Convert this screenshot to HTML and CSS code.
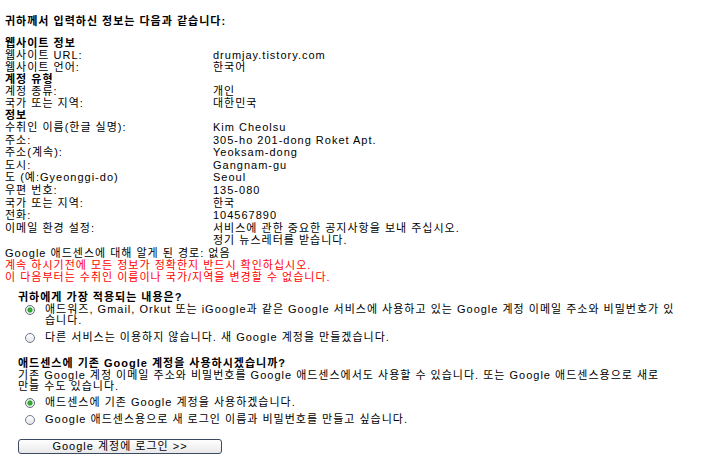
FILE: index.html
```html
<!DOCTYPE html>
<html lang="ko">
<head>
  <meta charset="UTF-8" />
  <title>Google 애드센스 - 정보 확인</title>
  <link rel="stylesheet" href="styles.css">
</head>
<body>
  <div class="page">
    <h1 class="intro">귀하께서 입력하신 정보는 다음과 같습니다:</h1>

    <div class="info">
      <div class="section-title">웹사이트 정보</div>
      <div class="row"><span>웹사이트 URL:</span><span>drumjay.tistory.com</span></div>
      <div class="row"><span>웹사이트 언어:</span><span>한국어</span></div>

      <div class="section-title">계정 유형</div>
      <div class="row"><span>계정 종류:</span><span>개인</span></div>
      <div class="row"><span>국가 또는 지역:</span><span>대한민국</span></div>

      <div class="section-title">정보</div>
      <div class="contact">
        <div class="row"><span>수취인 이름(한글 실명):</span><span>Kim Cheolsu</span></div>
        <div class="row"><span>주소:</span><span>305-ho 201-dong Roket Apt.</span></div>
        <div class="row"><span>주소(계속):</span><span>Yeoksam-dong</span></div>
        <div class="row"><span>도시:</span><span>Gangnam-gu</span></div>
        <div class="row"><span>도 (예:Gyeonggi-do)</span><span>Seoul</span></div>
        <div class="row"><span>우편 번호:</span><span>135-080</span></div>
        <div class="row"><span>국가 또는 지역:</span><span>한국</span></div>
        <div class="row"><span>전화:</span><span>104567890</span></div>
        <div class="row"><span>이메일 환경 설정:</span><span>서비스에 관한 중요한 공지사항을 보내 주십시오.<br>정기 뉴스레터를 받습니다.</span></div>
      </div>
    </div>

    <p class="source">Google 애드센스에 대해 알게 된 경로: 없음</p>
    <p class="warning">계속 하시기전에 모든 정보가 정확한지 반드시 확인하십시오.<br>이 다음부터는 수취인 이름이나 국가/지역을 변경할 수 없습니다.</p>

    <div class="question">
      <div class="q-title">귀하에게 가장 적용되는 내용은?</div>
      <label class="option">
        <input type="radio" name="status" checked>
        <span>애드워즈, Gmail, Orkut 또는 iGoogle과 같은 Google 서비스에 사용하고 있는 Google 계정 이메일 주소와 비밀번호가 있습니다.</span>
      </label>
      <label class="option">
        <input type="radio" name="status">
        <span>다른 서비스는 이용하지 않습니다. 새 Google 계정을 만들겠습니다.</span>
      </label>
    </div>

    <div class="question second">
      <div class="q-title">애드센스에 기존 Google 계정을 사용하시겠습니까?</div>
      <p class="q-desc">기존 Google 계정 이메일 주소와 비밀번호를 Google 애드센스에서도 사용할 수 있습니다. 또는 Google 애드센스용으로 새로 만들 수도 있습니다.</p>
      <label class="option">
        <input type="radio" name="login" checked>
        <span>애드센스에 기존 Google 계정을 사용하겠습니다.</span>
      </label>
      <label class="option">
        <input type="radio" name="login">
        <span>Google 애드센스용으로 새 로그인 이름과 비밀번호를 만들고 싶습니다.</span>
      </label>
    </div>

    <button class="login-btn" type="button">Google 계정에 로그인 &gt;&gt;</button>
  </div>
</body>
</html>
```

FILE: styles.css
```css
body {
  margin: 0;
  background: #fff;
  color: #000;
  font-family: "Liberation Sans", "Noto Sans CJK KR", sans-serif;
  font-size: 11px;
  line-height: 12px;
  letter-spacing: 1px;
}
.page {
  width: 673px;
  padding: 15px 5px 0 5px;
}
.intro {
  font-size: 11px;
  line-height: 12px;
  font-weight: bold;
  margin: 0 0 10px 0;
}
.section-title {
  font-weight: bold;
}
.row {
  display: grid;
  grid-template-columns: 208px 1fr;
}
.contact .row {
  line-height: 12.6px;
}
.source {
  margin: 0;
}
.warning {
  margin: 0;
  color: #f00;
}
.question {
  padding-left: 13px;
  margin-top: 8px;
}
.question.second {
  margin-top: 14px;
}
.q-title {
  font-weight: bold;
  margin-bottom: 1px;
}
.q-desc {
  margin: 0 0 5px 0;
  line-height: 11px;
  word-break: keep-all;
}
.option {
  display: flex;
  align-items: flex-start;
  line-height: 11.5px;
  margin-bottom: 5px;
}
.option input {
  appearance: none;
  -webkit-appearance: none;
  box-sizing: border-box;
  flex: none;
  width: 10px;
  height: 10px;
  margin: 1px 10px 0 7px;
  border: 1px solid #6d7b8c;
  border-radius: 50%;
  background: linear-gradient(#ffffff, #e4e4e4);
}
.option input:checked {
  background: radial-gradient(circle, #3dbb3d 0, #2a9a2a 2px, #dff0df 3px, #ffffff 5px);
  border-color: #5c6c7c;
}
.login-btn {
  display: block;
  margin: 14px 0 0 13px;
  width: 204px;
  height: 15px;
  padding: 0;
  border: 1px solid #3b4a63;
  border-radius: 3px;
  background: linear-gradient(#ffffff, #e8e8e8);
  font-family: "Liberation Sans", "Noto Sans CJK KR", sans-serif;
  font-size: 11px;
  line-height: 13px;
  letter-spacing: 1px;
  color: #000;
}
```
